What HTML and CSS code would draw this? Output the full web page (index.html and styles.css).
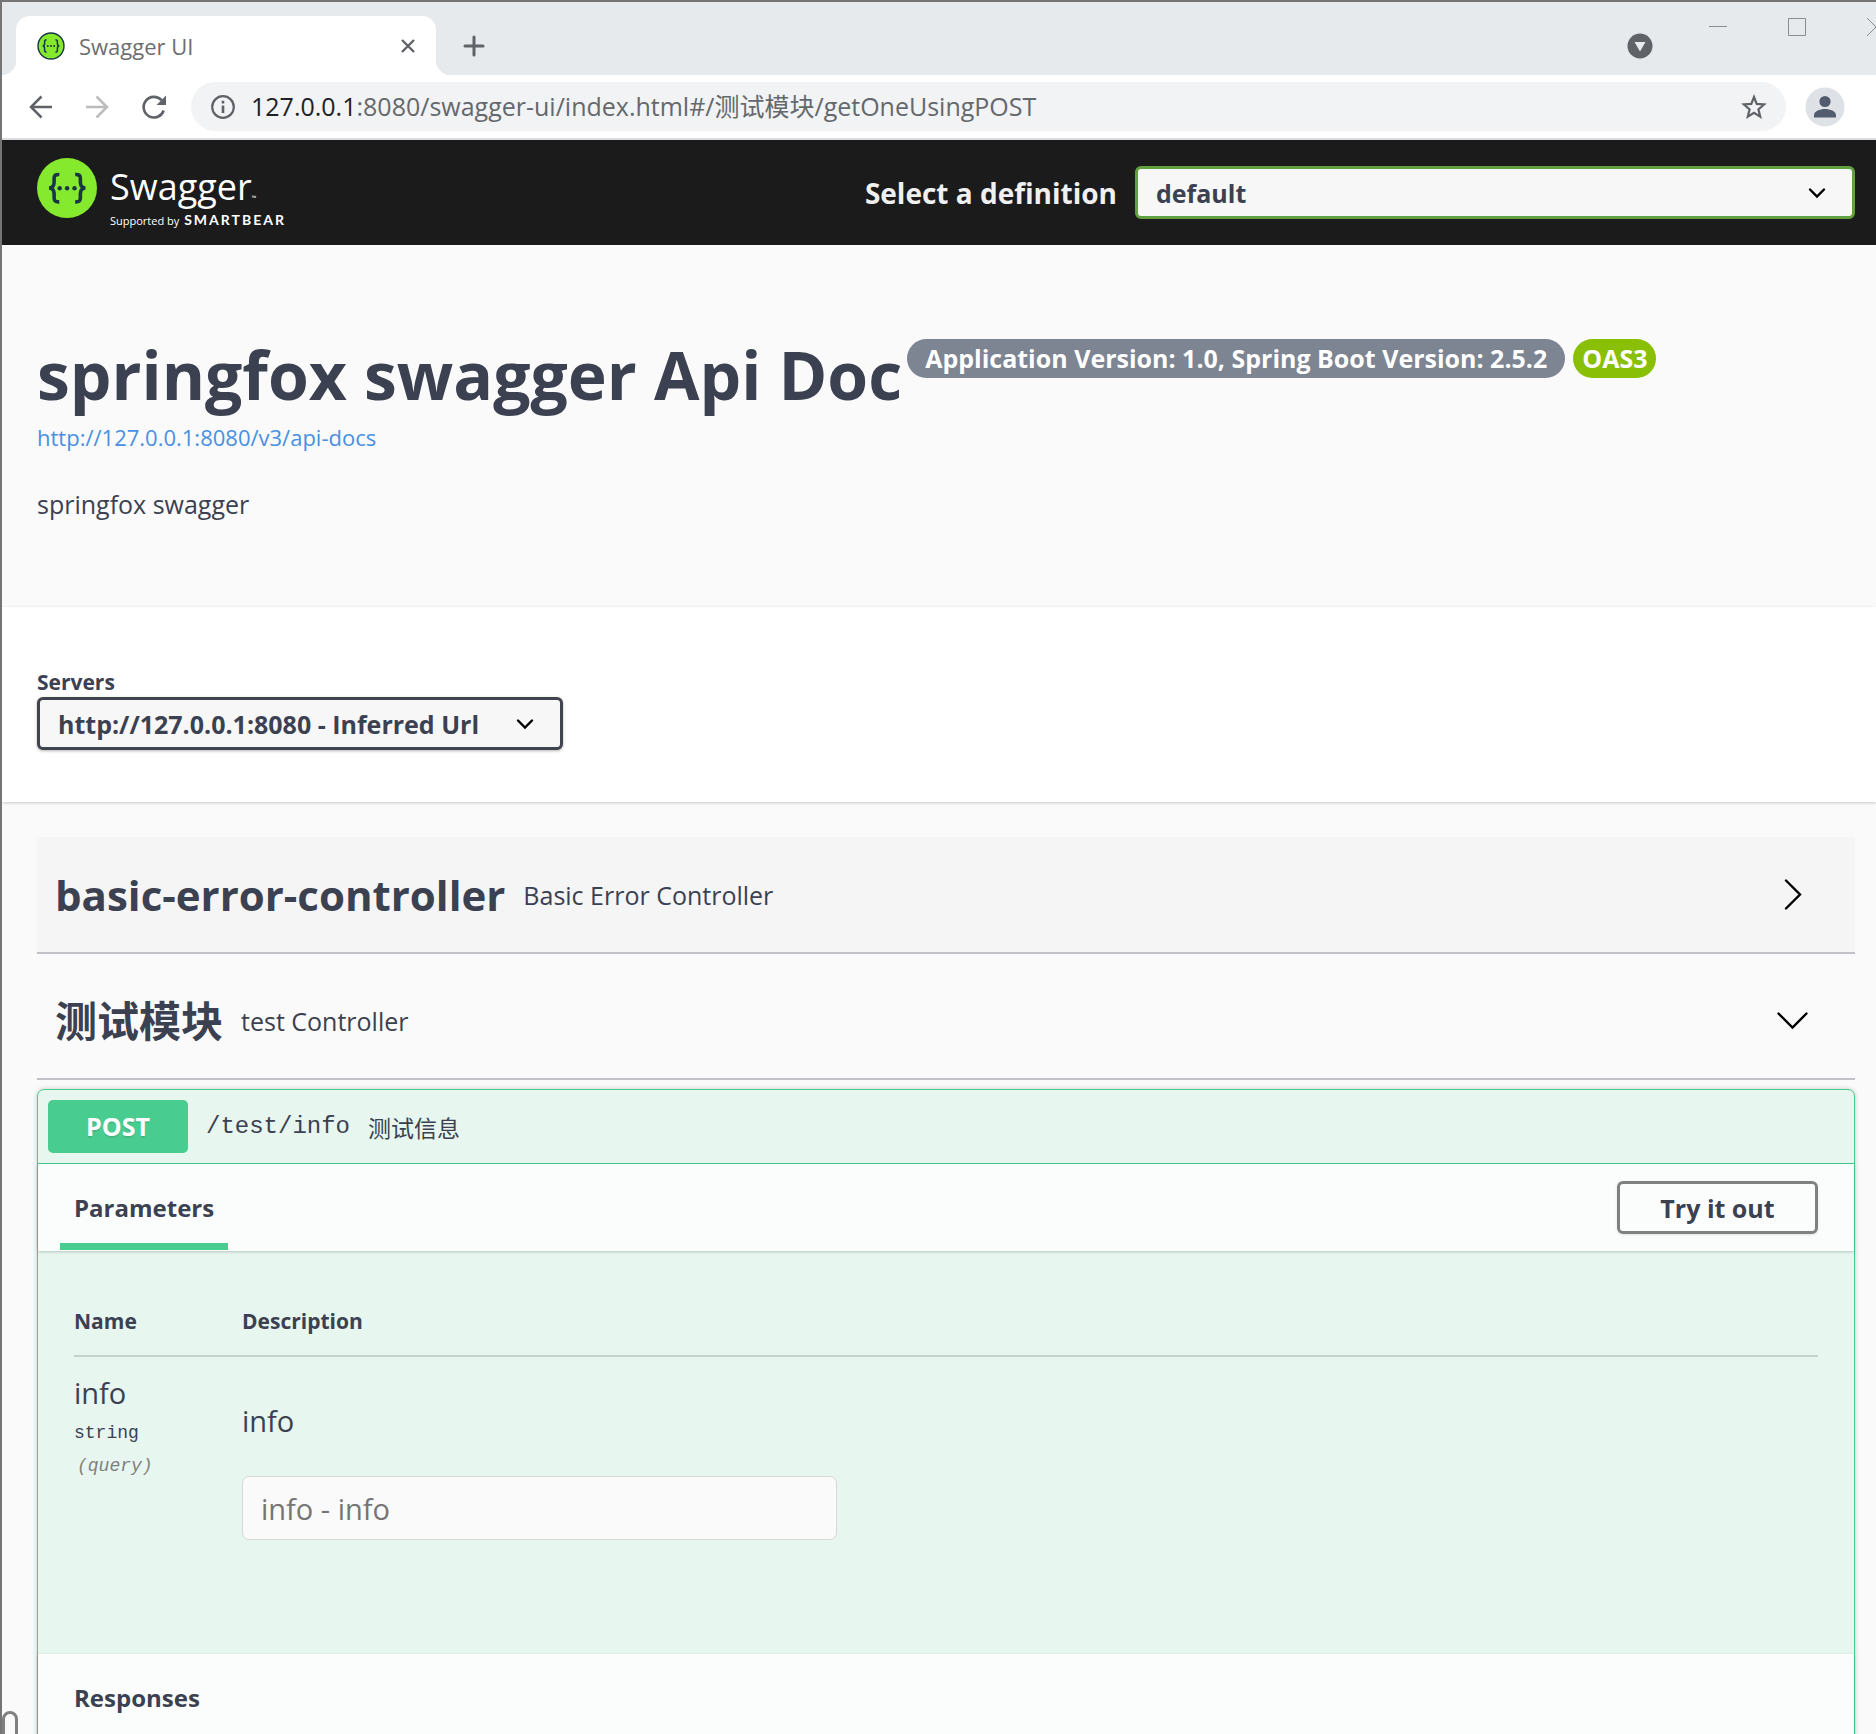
FILE: index.html
```html
<!DOCTYPE html>
<html lang="en">
<head>
  <meta charset="utf-8">
  <title>Swagger UI</title>
  <link rel="stylesheet" href="styles.css">
</head>
<body>
<div class="window">

  <!-- browser chrome -->
  <div class="tabstrip">
    <div class="tab">
      <svg class="tab-icon" viewBox="0 0 28 28" aria-hidden="true">
        <circle cx="14" cy="14" r="13" fill="#85ea2d" stroke="#173647" stroke-width="1.4"/>
        <g fill="none" stroke="#173647" stroke-width="1.5">
          <path d="M9.6 7.8c-1.6 0-2 .6-2 2v2c0 1.400-.5 2.200-2 2.200 1.500 0 2 .8 2 2.200v2c0 1.400.4 2 2 2"/>
          <path d="M18.400 7.800c1.600 0 2 .6 2 2v2c0 1.400.5 2.200 2 2.200-1.500 0-2 .8-2 2.200v2c0 1.400-.4 2-2 2"/>
        </g>
        <g fill="#173647"><circle cx="10.800" cy="14" r="1"/><circle cx="14" cy="14" r="1"/><circle cx="17.200" cy="14" r="1"/></g>
      </svg>
      <span class="tab-title">Swagger UI</span>
      <button class="icon-btn" type="button" aria-label="Close tab">
        <svg width="16" height="16" viewBox="0 0 16 16"><path d="M2 2l12 12M14 2L2 14" stroke="#5f6368" stroke-width="2.400" fill="none"/></svg>
      </button>
    </div>
    <button class="icon-btn new-tab" type="button" aria-label="New tab">
      <svg width="22" height="22" viewBox="0 0 22 22"><path d="M11 2v18M2 11h18" stroke="#5f6368" stroke-width="3" stroke-linecap="round"/></svg>
    </button>
    <button class="icon-btn tab-search" type="button" aria-label="Search tabs">
      <svg width="26" height="26" viewBox="0 0 26 26"><circle cx="13" cy="13" r="12.500" fill="#5f6368"/><path d="M7.500 9h11L13 18.500z" fill="#e6eaec"/></svg>
    </button>
    <div class="caption-btns">
      <button class="icon-btn" type="button" aria-label="Minimize">
        <svg width="18" height="18" viewBox="0 0 18 18"><path d="M0 8.500h18" stroke="#8a8d8f"/></svg>
      </button>
      <button class="icon-btn" type="button" aria-label="Maximize">
        <svg width="18" height="18" viewBox="0 0 18 18"><path d="M.5.500h17v17H.5z" stroke="#8a8d8f" fill="none"/></svg>
      </button>
      <button class="icon-btn" type="button" aria-label="Close">
        <svg width="18" height="18" viewBox="0 0 18 18"><path d="M0 0l18 18M18 0L0 18" stroke="#8a8d8f"/></svg>
      </button>
    </div>
  </div>

  <div class="toolbar">
    <button class="icon-btn" type="button" aria-label="Back">
      <svg width="24" height="24" viewBox="0 0 24 24"><path d="M23 12H2M12.500 1.500L2 12l10.500 10.500" stroke="#5f6368" stroke-width="2.500" fill="none"/></svg>
    </button>
    <button class="icon-btn" type="button" aria-label="Forward">
      <svg width="24" height="24" viewBox="0 0 24 24"><path d="M1 12h21M11.500 1.500L22 12 11.500 22.500" stroke="#babcbe" stroke-width="2.500" fill="none"/></svg>
    </button>
    <button class="icon-btn" type="button" aria-label="Reload">
      <svg width="26" height="26" viewBox="0 0 26 26"><path d="M20.500 6.200A10.300 10.300 0 1 0 22.700 16.500" stroke="#5f6368" stroke-width="2.600" fill="none"/><path d="M25 1.500v9.500h-9.500z" fill="#5f6368"/></svg>
    </button>
    <div class="omnibox">
      <svg width="24" height="24" viewBox="0 0 24 24" aria-hidden="true"><circle cx="12" cy="12" r="10.800" stroke="#5f6368" stroke-width="2.200" fill="none"/><path d="M12 10.500v7.500M12 5.800v2.600" stroke="#5f6368" stroke-width="2.600"/></svg>
      <span class="url"><b>127.0.0.1</b>:8080/swagger-ui/index.html#/测试模块/getOneUsingPOST</span>
      <button class="icon-btn" type="button" aria-label="Bookmark this page">
        <svg width="26" height="26" viewBox="0 0 26 26"><path d="M13 3l2.700 6.900 7.400.6-5.700 4.800 1.800 7.300L13 18.700l-6.200 3.900 1.800-7.300-5.700-4.800 7.400-.6z" stroke="#5f6368" stroke-width="2.200" fill="none"/></svg>
      </button>
    </div>
    <button class="icon-btn" type="button" aria-label="Profile">
      <svg width="40" height="40" viewBox="0 0 40 40"><circle cx="20" cy="20" r="19.500" fill="#dee1e6"/><circle cx="20" cy="14.500" r="5.600" fill="#525c6e"/><path d="M9 30.500v-2.300c0-4 6-6.200 11-6.200s11 2.200 11 6.200v2.300z" fill="#525c6e"/></svg>
    </button>
  </div>

  <!-- page -->
  <div class="page">
    <header class="topbar">
      <a class="logo" href="#" aria-label="Swagger, supported by SmartBear">
        <svg width="60" height="60" viewBox="0 0 60 60" aria-hidden="true">
          <circle cx="30" cy="30" r="30" fill="#85ea2d"/>
          <g fill="none" stroke="#173647" stroke-width="3.600">
            <path d="M22.300 16.500c-4.300-.2-5.300 1.200-5.200 4.300.1 4.300.6 8.600-4.900 9.200 5.500.6 5 4.900 4.900 9.200-.1 3.600 1 4.900 5.200 4.700"/>
            <path d="M38.200 16.500c4.300-.2 5.300 1.200 5.200 4.300-.1 4.300-.6 8.600 4.900 9.200-5.500.6-5 4.900-4.900 9.200.1 3.600-1 4.900-5.200 4.700"/>
          </g>
          <g fill="#173647"><circle cx="22.700" cy="30.200" r="2.200"/><circle cx="30.100" cy="30.200" r="2.200"/><circle cx="37.500" cy="30.200" r="2.200"/></g>
        </svg>
        <span class="logo-text">
          <span class="logo-name">Swagger<small>™</small></span>
          <span class="logo-by">Supported by <b>SMARTBEAR</b></span>
        </span>
      </a>
      <label class="select-label" for="definition">Select a definition</label>
      <div class="select-box definition-box">
        <select id="definition"><option>default</option></select>
        <svg class="select-arrow" width="18" height="12" viewBox="0 0 18 12" aria-hidden="true"><path d="M2 2.500l7 7 7-7" stroke="#000" stroke-width="2.400" fill="none" stroke-linecap="round"/></svg>
      </div>
    </header>

    <section class="info">
      <div class="title-row">
        <h1>springfox swagger Api Doc</h1>
        <span class="version">Application Version: 1.0, Spring Boot Version: 2.5.2</span>
        <span class="version oas">OAS3</span>
      </div>
      <a class="docs-link" href="#">http://127.0.0.1:8080/v3/api-docs</a>
      <p class="description">springfox swagger</p>
    </section>

    <section class="servers">
      <label for="servers">Servers</label>
      <div class="select-box servers-box">
        <select id="servers"><option>http://127.0.0.1:8080 - Inferred Url</option></select>
        <svg class="select-arrow" width="18" height="12" viewBox="0 0 18 12" aria-hidden="true"><path d="M2 2.500l7 7 7-7" stroke="#000" stroke-width="2.400" fill="none" stroke-linecap="round"/></svg>
      </div>
    </section>

    <main class="operations">
      <div class="tag tag-hover">
        <h2>basic-error-controller</h2>
        <span>Basic Error Controller</span>
        <button class="icon-btn" type="button" aria-label="Expand operation">
          <svg width="32" height="32" viewBox="0 0 32 32"><path d="M10 1.500L24 15.500 10 29.500" stroke="#000" stroke-width="2.400" fill="none" stroke-linecap="round"/></svg>
        </button>
      </div>
      <div class="tag">
        <h2>测试模块</h2>
        <span>test Controller</span>
        <button class="icon-btn" type="button" aria-label="Collapse operation">
          <svg width="32" height="32" viewBox="0 0 32 32"><path d="M2.500 8.500l14 14 14-14" stroke="#000" stroke-width="2.400" fill="none" stroke-linecap="round"/></svg>
        </button>
      </div>

      <div class="opblock">
        <div class="opblock-summary">
          <span class="method">POST</span>
          <span class="path">/test/info</span>
          <span class="summary">测试信息</span>
        </div>

        <div class="section-header">
          <h3 class="section-tab active">Parameters</h3>
          <button class="try-out" type="button">Try it out</button>
        </div>
        <div class="parameters">
          <table>
            <thead>
              <tr><th class="col-name">Name</th><th>Description</th></tr>
            </thead>
            <tbody>
              <tr>
                <td>
                  <label class="param-name" for="info">info</label>
                  <div class="param-type">string</div>
                  <div class="param-in">(query)</div>
                </td>
                <td>
                  <p>info</p>
                  <input id="info" type="text" placeholder="info - info">
                </td>
              </tr>
            </tbody>
          </table>
        </div>

        <div class="section-header">
          <h3 class="section-tab">Responses</h3>
        </div>
      </div>
    </main>
  </div>

  <div class="corner-mark"></div>
</div>
</body>
</html>
```
FILE: styles.css
```css
*{
  box-sizing: border-box;
}

body{
  margin: 0;
  font-family: "Open Sans", "Noto Sans", "Noto Sans CJK SC", sans-serif;
  color: #3b4151;
  background-color: #fafafa;
}

h1, h2, h3, p{
  margin: 0;
}

.window{
  position: relative;
  display: flex;
  flex-direction: column;
  height: 100vh;
  overflow: hidden;
  border-top: 2px solid #757575;
  border-left: 2px solid #757575;
}

.icon-btn{
  display: flex;
  flex: none;
  padding: 0;
  border: 0;
  background: none;
}

/* browser chrome */
.tabstrip{
  display: flex;
  flex: none;
  align-items: center;
  height: 73px;
  padding: 14px 0 0 14px;
  overflow: hidden;
  background-color: #e6eaec;
}

.tab{
  position: relative;
  display: flex;
  align-items: center;
  align-self: stretch;
  width: 420px;
  padding: 0 20px 0 21px;
  border-radius: 14px 14px 0 0;
  background-color: #fff;
}

.tab::before,
.tab::after{
  content: "";
  position: absolute;
  bottom: 0;
  width: 14px;
  height: 14px;
}

.tab::before{
  left: -14px;
  background: radial-gradient(circle at 0 0, transparent 14px, #fff 14px);
}

.tab::after{
  right: -14px;
  background: radial-gradient(circle at 100% 0, transparent 14px, #fff 14px);
}

.tab-icon{
  width: 28px;
  height: 28px;
}

.tab-title{
  flex: 1;
  margin-left: 14px;
  font-size: 22px;
  color: #6b6e70;
}

.new-tab{
  margin-left: 27px;
}

.tab-search{
  margin-left: auto;
}

.caption-btns{
  display: flex;
  align-self: flex-start;
  gap: 61px;
  margin: 2px -9px 0 56px;
}

.toolbar{
  display: flex;
  flex: none;
  align-items: center;
  height: 65px;
  padding: 0 31px 0 27px;
  border-bottom: 2px solid #dadce0;
  background-color: #fff;
  gap: 32px;
}

.omnibox{
  display: flex;
  flex: 1;
  align-items: center;
  height: 49px;
  margin: 0 -13px 0 -8px;
  padding: 0 19px 0 20px;
  border-radius: 25px;
  background-color: #f1f3f4;
}

.url{
  flex: 1;
  margin-left: 16px;
  font-size: 25px;
  line-height: 32px;
  padding-bottom: 2px;
  color: #65686c;
}

.url b{
  font-weight: normal;
  color: #202124;
}

/* swagger page */
.page{
  flex: 1;
  overflow: hidden;
}

.topbar{
  display: flex;
  align-items: center;
  height: 105px;
  padding: 0 21px 0 35px;
  background-color: #1b1b1b;
}

.logo{
  display: flex;
  flex: 1;
  align-self: stretch;
  align-items: flex-start;
  gap: 13px;
  padding-top: 18px;
  color: #fff;
  text-decoration: none;
}

.logo-text{
  display: flex;
  flex-direction: column;
}

.logo-name{
  margin-top: 14px;
  font-size: 36px;
  line-height: 30px;
}

.logo-name small{
  font-size: 6px;
  line-height: 1;
}

.logo-by{
  margin-top: 10px;
  font-size: 11px;
  line-height: 16px;
}

.logo-by b{
  margin-left: 2px;
  font-family: Lato, sans-serif;
  font-size: 14px;
  letter-spacing: 2px;
}

.select-label{
  margin-right: 18px;
  font-size: 28px;
  font-weight: bold;
  color: #f0f0f0;
}

.select-box{
  display: grid;
  align-items: center;
}

.select-box select,
.select-arrow{
  grid-area: 1 / 1;
}

.select-box select{
  height: 53px;
  padding: 0 80px 0 18px;
  border: 3px solid #41444e;
  border-radius: 6px;
  background-color: #f7f7f7;
  box-shadow: 0 1px 3px rgba(0, 0, 0, .3);
  font: bold 25px "Open Sans", sans-serif;
  color: #3b4151;
  appearance: none;
}

.select-arrow{
  justify-self: end;
  margin-right: 29px;
  pointer-events: none;
}

.definition-box{
  width: 40%;
  max-width: 720px;
}

.definition-box select{
  border-color: #62a03f;
  box-shadow: none;
}

.info{
  padding: 89px 35px 86px;
}

.title-row{
  display: flex;
  align-items: flex-start;
  gap: 8px;
}

h1{
  margin-right: -3px;
  font-size: 66px;
  line-height: 80px;
}

.version{
  margin-top: 5px;
  padding: 0 18px;
  border-radius: 20px;
  background-color: #7d8492;
  font-size: 25px;
  font-weight: bold;
  line-height: 39px;
  color: #fff;
}

.oas{
  padding: 0 9px;
  background-color: #89bf04;
}

.docs-link{
  display: block;
  margin-top: 8px;
  font-size: 22px;
  line-height: 30px;
  color: #4990e2;
  text-decoration: none;
}

.description{
  margin-top: 35px;
  font-size: 25px;
  line-height: 34px;
}

.servers{
  padding: 61px 35px 52px;
  background-color: #fff;
  box-shadow: 0 1px 3px rgba(0, 0, 0, .2);
}

.servers label{
  display: block;
  margin-bottom: 1px;
  font-size: 21px;
  font-weight: bold;
  line-height: 28px;
}

.servers-box{
  width: fit-content;
}

.operations{
  padding: 35px 21px 0 35px;
}

.tag{
  display: flex;
  align-items: center;
  height: 117px;
  margin-bottom: 9px;
  padding: 0 47px 0 18px;
  border-bottom: 2px solid #bfc1c6;
}

.tag-hover{
  background-color: #f5f5f5;
}

.tag h2{
  font-size: 42px;
  line-height: 60px;
}

.tag span{
  flex: 1;
  margin-left: 18px;
  font-size: 25px;
}

.opblock{
  border: 1px solid #49cc90;
  border-radius: 7px;
  background-color: #e7f6ef;
  box-shadow: 0 0 5px rgba(0, 0, 0, .2);
}

.opblock-summary{
  display: flex;
  align-items: center;
  padding: 10px;
  border-bottom: 1px solid #49cc90;
}

.method{
  width: 140px;
  border-radius: 5px;
  background-color: #49cc90;
  font-size: 25px;
  font-weight: bold;
  line-height: 53px;
  text-align: center;
  text-shadow: 0 2px 0 rgba(0, 0, 0, .1);
  color: #fff;
}

.path{
  margin-left: 18px;
  font-family: "Liberation Mono", monospace;
  font-size: 24px;
}

.summary{
  margin-left: 18px;
  font-size: 23px;
}

.section-header{
  display: flex;
  align-items: center;
  justify-content: space-between;
  height: 87px;
  padding: 0 36px 0 22px;
  background-color: #fbfdfc;
  box-shadow: 0 1px 3px rgba(0, 0, 0, .2);
}

.section-tab{
  align-self: stretch;
  margin-bottom: 1px;
  padding: 8px 14px 0;
  border-bottom: 7px solid transparent;
  font-size: 24px;
  line-height: 71px;
}

.active{
  border-color: #49cc90;
}

.try-out{
  width: 201px;
  height: 53px;
  border: 3px solid #808080;
  border-radius: 6px;
  background: none;
  box-shadow: 0 1px 3px rgba(0, 0, 0, .1);
  font: bold 25px "Open Sans", sans-serif;
  color: #3b4151;
}

/* parameters */
.parameters{
  padding: 35px 36px 114px;
}

table{
  width: 100%;
  border-collapse: collapse;
}

th{
  padding: 21px 0 20px;
  border-bottom: 2px solid #c4d2cf;
  font-size: 21px;
  line-height: 28px;
  text-align: left;
}

.col-name{
  width: 168px;
}

td{
  padding: 17px 0 0;
  vertical-align: top;
}

.param-name,
td p{
  display: block;
  font-size: 29px;
  line-height: 38px;
}

.param-type,
.param-in{
  font-family: "Liberation Mono", monospace;
  font-size: 18px;
  line-height: 33px;
}

.param-type{
  margin-top: 5px;
}

.param-in{
  margin-left: 3px;
  font-style: italic;
  color: #808080;
}

td p{
  margin: 28px 0 36px;
}

td input{
  display: block;
  width: 100%;
  max-width: 595px;
  height: 64px;
  padding: 0 18px;
  border: 1px solid #d9d9d9;
  border-radius: 7px;
  background-color: #fafafa;
  font: 29px "Open Sans", sans-serif;
}

td input::placeholder{
  color: #757575;
}

/* runs off the bottom of the window */
.corner-mark{
  position: absolute;
  bottom: -10px;
  left: 0;
  width: 16px;
  height: 33px;
  border: 3px solid #808080;
  border-radius: 8px;
}
```
